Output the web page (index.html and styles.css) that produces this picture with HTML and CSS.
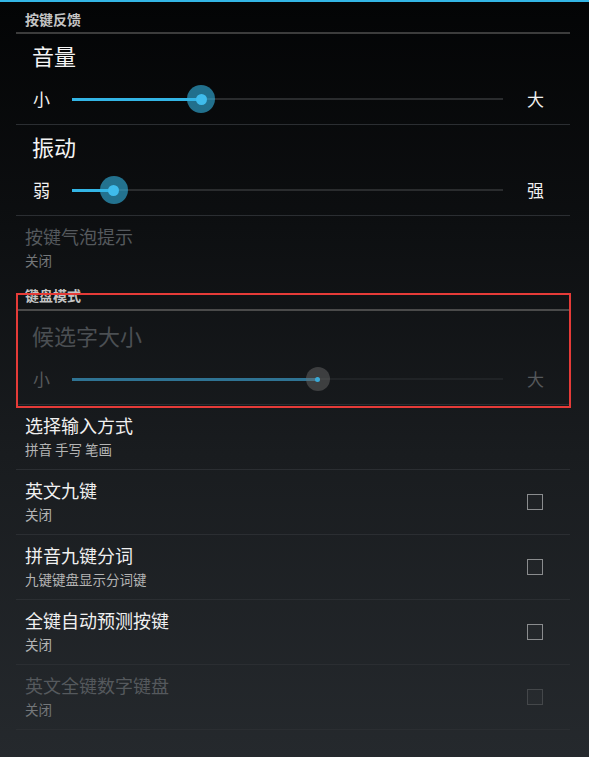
FILE: index.html
```html
<!DOCTYPE html>
<html lang="zh">
<head>
<meta charset="utf-8">
<link rel="stylesheet" href="styles.css">
</head>
<body>
<div class="topbar"></div>
<div class="list">
  <div class="header header-first">按键反馈</div>

  <div class="slider-item">
    <div class="slider-title">音量</div>
    <div class="slider-row">
      <span class="slider-label">小</span>
      <div class="track">
        <div class="fill" style="width:30%"></div>
        <div class="thumb" style="left:30%"><span class="dot"></span></div>
      </div>
      <span class="slider-label right">大</span>
    </div>
  </div>
  <div class="sep"></div>

  <div class="slider-item">
    <div class="slider-title">振动</div>
    <div class="slider-row">
      <span class="slider-label">弱</span>
      <div class="track">
        <div class="fill" style="width:9.7%"></div>
        <div class="thumb" style="left:9.7%"><span class="dot"></span></div>
      </div>
      <span class="slider-label right">强</span>
    </div>
  </div>
  <div class="sep"></div>

  <div class="item disabled">
    <div class="text">
      <div class="title">按键气泡提示</div>
      <div class="summary">关闭</div>
    </div>
  </div>

  <div class="highlight">
    <div class="header header-second">键盘模式</div>
    <div class="slider-item candidate disabled">
      <div class="slider-title">候选字大小</div>
      <div class="slider-row">
        <span class="slider-label">小</span>
        <div class="track">
          <div class="fill" style="width:57%"></div>
          <div class="thumb" style="left:57%"><span class="dot"></span></div>
        </div>
        <span class="slider-label right">大</span>
      </div>
    </div>
    <div class="sep"></div>
  </div>

  <div class="item">
    <div class="text">
      <div class="title">选择输入方式</div>
      <div class="summary">拼音 手写 笔画</div>
    </div>
  </div>
  <div class="sep"></div>

  <div class="item">
    <div class="text">
      <div class="title">英文九键</div>
      <div class="summary">关闭</div>
    </div>
    <span class="checkbox"></span>
  </div>
  <div class="sep"></div>

  <div class="item">
    <div class="text">
      <div class="title">拼音九键分词</div>
      <div class="summary">九键键盘显示分词键</div>
    </div>
    <span class="checkbox"></span>
  </div>
  <div class="sep"></div>

  <div class="item">
    <div class="text">
      <div class="title">全键自动预测按键</div>
      <div class="summary">关闭</div>
    </div>
    <span class="checkbox"></span>
  </div>
  <div class="sep"></div>

  <div class="item disabled">
    <div class="text">
      <div class="title">英文全键数字键盘</div>
      <div class="summary">关闭</div>
    </div>
    <span class="checkbox"></span>
  </div>
  <div class="sep"></div>
</div>
</body>
</html>
```

FILE: styles.css
```css
html, body {
  margin: 0;
  padding: 0;
}
body {
  width: 589px;
  height: 757px;
  overflow: hidden;
  background: linear-gradient(to bottom, #030405 0%, #0d0f11 30%, #191c1f 60%, #25292d 100%);
  font-family: "Noto Sans CJK SC", "Noto Sans", sans-serif;
  color: #f2f2f2;
}
.topbar {
  height: 2px;
  background: #33b5e5;
}
.list {
  padding: 0 19px 0 16px;
  display: flex;
  flex-direction: column;
}
.header {
  font-size: 14px;
  font-weight: bold;
  color: #c4c4c4;
  padding-left: 9px;
  line-height: 20px;
  border-bottom: 2px solid #3c3c3c;
}
.header-first {
  height: 23px;
  padding-top: 7px;
}
.header-second {
  height: 24px;
  padding-top: 5px;
  border-bottom-color: #4a4a4a;
}
.sep {
  height: 1px;
  background: #2b2e32;
}
.slider-item {
  height: 90px;
  display: flex;
  flex-direction: column;
}
.slider-title {
  font-size: 22px;
  line-height: 30px;
  padding-left: 16px;
  margin-top: 6px;
  color: #f4f4f4;
}
.slider-row {
  display: flex;
  align-items: center;
  height: 30px;
  margin-top: 14px;
  padding-left: 17px;
  padding-right: 25px;
}
.slider-label {
  font-size: 17px;
  width: 18px;
  line-height: 24px;
  color: #f0f0f0;
}
.slider-label.right {
  margin-left: 24px;
}
.track {
  position: relative;
  flex: 1;
  margin-left: 21px;
  height: 2px;
  background: #2a2c2e;
}
.fill {
  position: absolute;
  left: 0;
  top: -0.5px;
  height: 3px;
  background: #33b5e5;
}
.thumb {
  position: absolute;
  top: 1px;
  width: 28px;
  height: 28px;
  margin: -14px 0 0 -14px;
  border-radius: 50%;
  background: rgba(51, 181, 229, 0.6);
  display: flex;
  align-items: center;
  justify-content: center;
}
.dot {
  width: 11px;
  height: 11px;
  border-radius: 50%;
  background: #3fbcec;
}
.highlight {
  position: relative;
  display: flex;
  flex-direction: column;
}
.highlight::after {
  content: "";
  position: absolute;
  left: 0;
  right: -1px;
  top: 13px;
  bottom: -3px;
  border: 2px solid #e53b38;
  pointer-events: none;
}
.candidate {
  height: 93px;
}
.candidate .slider-title {
  color: #4b4f53;
  margin-top: 9px;
}
.candidate .slider-row {
  margin-top: 14px;
}
.candidate .slider-label {
  color: #56595c;
}
.candidate .track {
  background: #202326;
}
.candidate .fill {
  background: #2f7393;
}
.candidate .thumb {
  width: 24px;
  height: 24px;
  margin: -12px 0 0 -12px;
  background: rgba(110, 110, 110, 0.45);
}
.candidate .dot {
  width: 5px;
  height: 5px;
  background: #3aa9d6;
}
.item {
  height: 64px;
  display: flex;
  align-items: center;
  padding-left: 9px;
}
.text {
  flex: 1;
  display: flex;
  flex-direction: column;
  margin-top: -3px;
}
.title {
  font-size: 18px;
  line-height: 24px;
  color: #f0f0f0;
}
.summary {
  font-size: 13.5px;
  line-height: 20px;
  margin-top: 2px;
  color: #b4b4b4;
}
.item.disabled .title {
  color: #55595d;
}
.item.disabled .summary {
  color: #74777a;
}
.checkbox {
  width: 14px;
  height: 14px;
  border: 1px solid #8a8c8e;
  margin-right: 27px;
  background: rgba(255, 255, 255, 0.02);
}
.item.disabled .checkbox {
  border-color: #44474a;
}
```
